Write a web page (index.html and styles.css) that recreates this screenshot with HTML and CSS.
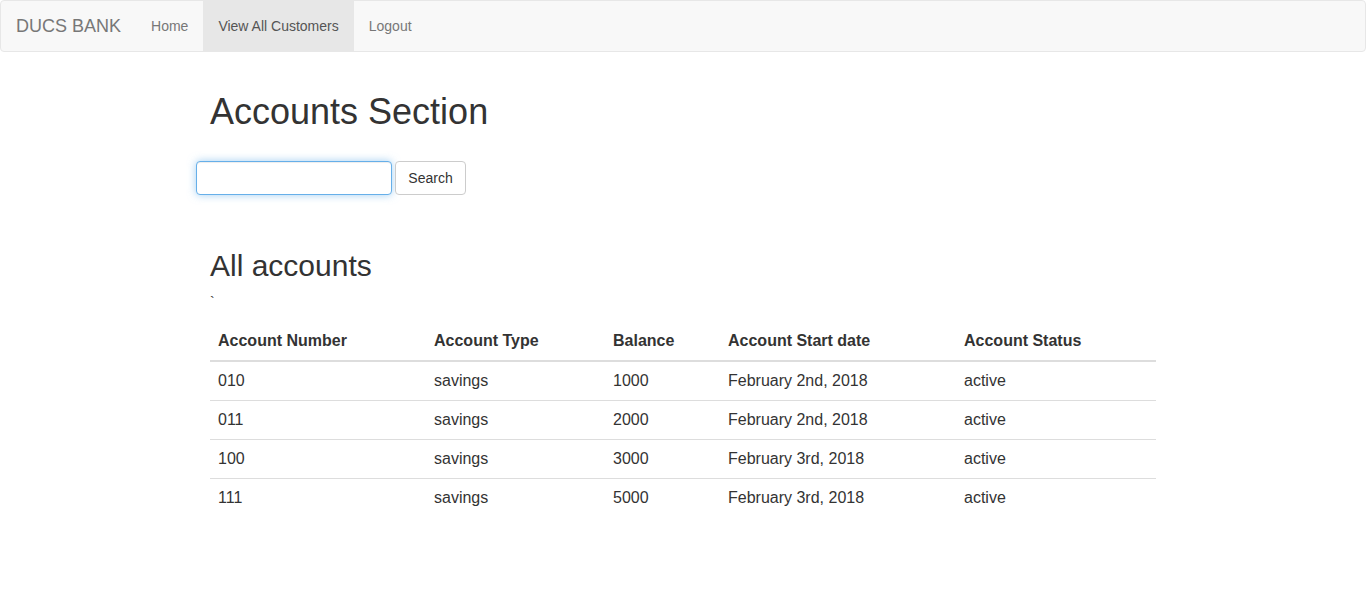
FILE: index.html
```html
<!DOCTYPE html>
<html lang="en">
<head>
<meta charset="utf-8">
<title>DUCS BANK</title>
<link rel="stylesheet" href="styles.css">
</head>
<body>
<nav class="navbar">
  <a class="brand" href="#">DUCS BANK</a>
  <ul class="nav">
    <li><a href="#">Home</a></li>
    <li class="active"><a href="#">View All Customers</a></li>
    <li><a href="#">Logout</a></li>
  </ul>
</nav>
<main class="main">
  <h1 class="title">Accounts Section</h1>
  <form class="search">
    <input class="search-input" type="text">
    <button class="btn" type="button">Search</button>
  </form>
  <h2 class="subtitle">All accounts</h2>
  <p class="tick">`</p>
  <table class="table">
    <thead>
      <tr>
        <th class="c1">Account Number</th>
        <th class="c2">Account Type</th>
        <th class="c3">Balance</th>
        <th class="c4">Account Start date</th>
        <th class="c5">Account Status</th>
      </tr>
    </thead>
    <tbody>
      <tr><td>010</td><td>savings</td><td>1000</td><td>February 2nd, 2018</td><td>active</td></tr>
      <tr><td>011</td><td>savings</td><td>2000</td><td>February 2nd, 2018</td><td>active</td></tr>
      <tr><td>100</td><td>savings</td><td>3000</td><td>February 3rd, 2018</td><td>active</td></tr>
      <tr><td>111</td><td>savings</td><td>5000</td><td>February 3rd, 2018</td><td>active</td></tr>
    </tbody>
  </table>
</main>
</body>
</html>
```
FILE: styles.css
```css
* { box-sizing: border-box; }
html, body { margin: 0; padding: 0; }
body {
  font-family: "Liberation Sans", Arial, Helvetica, sans-serif;
  font-size: 14px;
  line-height: 20px;
  color: #333;
  background: #fff;
}
a { text-decoration: none; }

.navbar {
  display: flex;
  align-items: stretch;
  height: 52px;
  background: #f8f8f8;
  border: 1px solid #e7e7e7;
  border-radius: 4px;
  margin-bottom: 20px;
}
.brand {
  display: block;
  padding: 15px;
  font-size: 18px;
  line-height: 20px;
  color: #777;
}
.nav {
  display: flex;
  list-style: none;
  margin: 0;
  padding: 0;
}
.nav a {
  display: block;
  padding: 15px;
  line-height: 20px;
  color: #777;
}
.nav .active a {
  background: #e7e7e7;
  color: #555;
}

.main {
  display: flex;
  flex-direction: column;
  width: 946px;
  margin: 0 auto;
}
.title {
  font-size: 36px;
  font-weight: 500;
  line-height: 40px;
  margin: 20px 0 10px;
}
.search {
  display: flex;
  gap: 3px;
  margin: 19px 0 0 -14px;
}
.search-input {
  width: 196px;
  height: 34px;
  padding: 6px 12px;
  font: inherit;
  color: #555;
  border: 1px solid #66afe9;
  border-radius: 4px;
  outline: 0;
  box-shadow: inset 0 1px 1px rgba(0,0,0,.075), 0 0 8px rgba(102,175,233,.6);
}
.btn {
  width: 71px;
  height: 34px;
  padding: 6px 12px;
  font: inherit;
  color: #333;
  background: #fff;
  border: 1px solid #ccc;
  border-radius: 4px;
}
.subtitle {
  font-size: 30px;
  font-weight: 500;
  line-height: 33px;
  margin: 54px 0 10px;
}
.tick {
  margin: 0 0 10px;
  line-height: 20px;
}
.table {
  width: 100%;
  border-collapse: collapse;
  font-size: 16px;
  line-height: 22px;
}
.table th, .table td {
  text-align: left;
  padding: 8px;
  vertical-align: top;
}
.table th { font-weight: bold; border-bottom: 2px solid #ddd; }
.table tbody tr + tr td { border-top: 1px solid #ddd; }
.c1 { width: 216px; }
.c2 { width: 179px; }
.c3 { width: 115px; }
.c4 { width: 236px; }
.c5 { width: 200px; }
```
